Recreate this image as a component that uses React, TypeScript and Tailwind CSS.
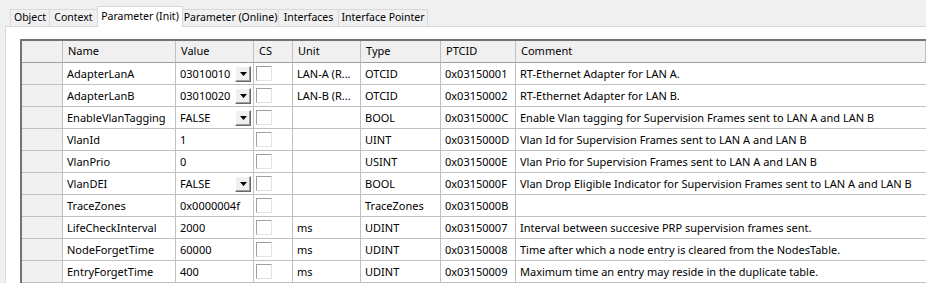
import React from "react";

type Row = {
  name: string;
  value: string;
  drop?: boolean;
  unit?: string;
  type: string;
  ptcid: string;
  comment?: string;
};

const rows: Row[] = [
  { name: "AdapterLanA", value: "03010010", drop: true, unit: "LAN-A (R...", type: "OTCID", ptcid: "0x03150001", comment: "RT-Ethernet Adapter for LAN A." },
  { name: "AdapterLanB", value: "03010020", drop: true, unit: "LAN-B (R...", type: "OTCID", ptcid: "0x03150002", comment: "RT-Ethernet Adapter for LAN B." },
  { name: "EnableVlanTagging", value: "FALSE", drop: true, type: "BOOL", ptcid: "0x0315000C", comment: "Enable Vlan tagging for Supervision Frames sent to LAN A and LAN B" },
  { name: "VlanId", value: "1", type: "UINT", ptcid: "0x0315000D", comment: "Vlan Id for Supervision Frames sent to LAN A and LAN B" },
  { name: "VlanPrio", value: "0", type: "USINT", ptcid: "0x0315000E", comment: "Vlan Prio for Supervision Frames sent to LAN A and LAN B" },
  { name: "VlanDEI", value: "FALSE", drop: true, type: "BOOL", ptcid: "0x0315000F", comment: "Vlan Drop Eligible Indicator for Supervision Frames sent to LAN A and LAN B" },
  { name: "TraceZones", value: "0x0000004f", type: "TraceZones", ptcid: "0x0315000B" },
  { name: "LifeCheckInterval", value: "2000", unit: "ms", type: "UDINT", ptcid: "0x03150007", comment: "Interval between succesive PRP supervision frames sent." },
  { name: "NodeForgetTime", value: "60000", unit: "ms", type: "UDINT", ptcid: "0x03150008", comment: "Time after which a node entry is cleared from the NodesTable." },
  { name: "EntryForgetTime", value: "400", unit: "ms", type: "UDINT", ptcid: "0x03150009", comment: "Maximum time an entry may reside in the duplicate table." },
];

const tabs = [
  { label: "Object", w: "w-[39px]" },
  { label: "Context", w: "w-[48px]" },
  { label: "Parameter (Init)", w: "w-[86px]", active: true },
  { label: "Parameter (Online)", w: "w-[95px]" },
  { label: "Interfaces", w: "w-[60px]" },
  { label: "Interface Pointer", w: "w-[90px]", last: true },
];

const cell = "border-r border-b border-[#c0c0c0] flex items-center pt-px overflow-hidden whitespace-nowrap";

const DropButton = () => (
  <span className="ml-auto mr-[2px] -mt-px w-[16px] h-[16px] shrink-0 flex items-center justify-center bg-[#f0f0f0] border border-t-white border-l-white border-r-[#696969] border-b-[#696969] shadow-[inset_-1px_-1px_0_#a0a0a0]">
    <svg width="7" height="4" viewBox="0 0 7 4">
      <path d="M0 0h7L3.5 4z" fill="#000" />
    </svg>
  </span>
);

const CheckBox = () => (
  <span className="ml-[2px] -mt-px w-[16px] h-[15px] bg-white border border-t-[#a0a0a0] border-l-[#a0a0a0] border-r-[#e3e3e3] border-b-[#e3e3e3]" />
);

export default function App() {
  return (
    <div className="w-[926px] h-[283px] overflow-hidden bg-[#f0f0f0] text-black text-[11px] font-['Noto_Sans',sans-serif]">
      <div className="h-[26px] flex items-end pl-[10px] whitespace-nowrap text-[10.5px]">
        {tabs.map((t) =>
          t.active ? (
            <div
              key={t.label}
              className={`${t.w} shrink-0 h-[21px] -mb-px relative z-10 bg-white border-l border-r border-t border-[#d9d9d9] flex items-start justify-center pt-[2px]`}
            >
              {t.label}
            </div>
          ) : (
            <div
              key={t.label}
              className={`${t.w} shrink-0 h-[17px] border-t border-[#d9d9d9] ${t.label === "Parameter (Online)" ? "" : "border-l"} ${t.last ? "border-r" : ""} flex items-center justify-center`}
            >
              {t.label}
            </div>
          )
        )}
      </div>
      <div className="ml-[5px] h-[257px] bg-white border-l border-t border-[#d9d9d9] pl-[14px] pt-[12px]">
        <div className="border-l-2 border-t-2 border-[#737373] grid grid-cols-[41px_113px_78px_39px_68px_80px_75px_1fr] auto-rows-[22px]">
          <div className="bg-[#f0f0f0] border-r border-b border-r-[#c0c0c0] border-b-[#a0a0a0]" />
          {["Name", "Value", "CS", "Unit", "Type", "PTCID", "Comment"].map((h) => (
            <div key={h} className="bg-[#f0f0f0] border-r border-b border-r-[#c0c0c0] border-b-[#a0a0a0] flex items-center pl-[5px] whitespace-nowrap">
              {h}
            </div>
          ))}
          {rows.map((r) => (
            <React.Fragment key={r.name}>
              <div className={`${cell} bg-[#f0f0f0]`} />
              <div className={`${cell} pl-[4px]`}>{r.name}</div>
              <div className={`${cell} pl-[4px]`}>
                <span>{r.value}</span>
                {r.drop && <DropButton />}
              </div>
              <div className={cell}>
                <CheckBox />
              </div>
              <div className={`${cell} pl-[4px]`}>{r.unit ?? ""}</div>
              <div className={`${cell} pl-[4px]`}>{r.type}</div>
              <div className={`${cell} pl-[4px]`}>{r.ptcid}</div>
              <div className={`${cell} pl-[4px] border-r-0`}>{r.comment ?? ""}</div>
            </React.Fragment>
          ))}
        </div>
      </div>
    </div>
  );
}
